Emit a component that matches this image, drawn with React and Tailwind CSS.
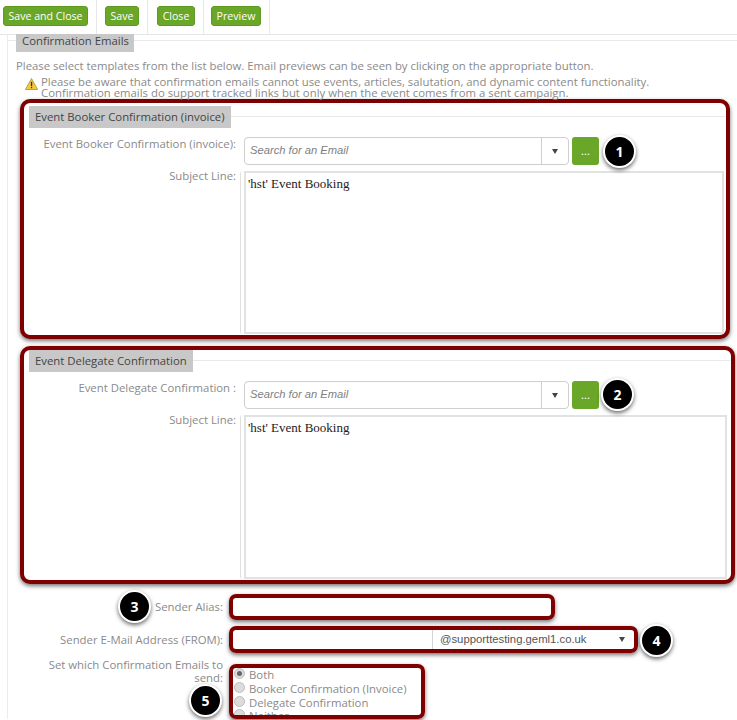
import React from 'react';

const labelFont = "font-['Open_Sans',sans-serif] text-[11.35px] text-[#8a8a8a]";
const redBox = 'border-[4px] border-[#7f0000] shadow-[0_2px_4px_rgba(0,0,0,0.55)]';

const Badge = ({ n, className }) => (
  <div className={`absolute w-[33px] h-[33px] rounded-full bg-black border-[2px] border-white shadow-[0_2px_4px_rgba(0,0,0,0.6)] flex items-center justify-center text-white text-[14px] font-bold font-['Open_Sans',sans-serif] ${className}`}>
    {n}
  </div>
);

const ToolButton = ({ children, className }) => (
  <button className={`block h-[20px] bg-[#6aa628] border border-[#5f9a22] rounded-[3px] text-white text-[10.6px] leading-none whitespace-nowrap font-['Open_Sans',sans-serif] ${className}`}>
    {children}
  </button>
);

const Legend = ({ children }) => (
  <div className="flex items-center">
    <div className="h-[22px] px-[6px] bg-[#c8c8c8] flex items-center text-[#444] font-['Open_Sans',sans-serif] text-[11.35px] whitespace-nowrap">
      {children}
    </div>
    <div className="flex-1 h-px bg-[#e8e8e8] -mt-[2px]" />
  </div>
);

const EmailSection = ({ title, label, textareaH, top, width, fieldW }) => (
  <section className={`${redBox} rounded-[10px] bg-white pl-[5px] pr-[1px] pb-[1px] ${width}`}>
    <div className={top}>
      <Legend>{title}</Legend>
    </div>
    <div className="flex mt-[9px]">
      <div className={`${labelFont} w-[207px] text-right -mt-[2px] whitespace-nowrap`}>{label}</div>
      <div className="ml-[8px] flex">
        <div className="w-[325px] h-[28px] bg-white border border-[#cfcfcf] rounded-[4px] flex">
          <div className="flex-1 pl-[5px] pb-[2px] flex items-center font-['Liberation_Sans',sans-serif] italic text-[11.2px] text-[#808080]">
            Search for an Email
          </div>
          <div className="w-[27px] border-l border-[#cfcfcf] flex items-center justify-center">
            <div className="w-0 h-0 border-l-[3.5px] border-r-[3.5px] border-t-[5px] border-l-transparent border-r-transparent border-t-[#444]" />
          </div>
        </div>
        <button className="ml-[3px] w-[27px] h-[28px] bg-[#6aa628] rounded-[3px] text-white text-[11px]">...</button>
      </div>
    </div>
    <div className="flex mt-[6px]">
      <div className={`${labelFont} w-[207px] text-right -mt-[4px] whitespace-nowrap`}>Subject Line:</div>
      <div className="ml-[4px] pl-[3px] border-l border-[#e0e0e0] rounded-l-[3px]">
        <div className={`${fieldW} ${textareaH} bg-white border-[2px] border-[#e2e2e2] pl-[2px] pt-[1px] font-['Liberation_Serif',serif] text-[13px] text-[#222]`}>
          'hst' Event Booking
        </div>
      </div>
    </div>
  </section>
);

const Radio = ({ label, checked }) => (
  <div className="flex items-center h-[13.7px]">
    <div className="w-[11px] h-[11px] rounded-full bg-[#dcdcdc] border border-[#bdbdbd] flex items-center justify-center -mt-[2px]">
      {checked && <div className="w-[5px] h-[5px] rounded-full bg-[#666]" />}
    </div>
    <span className="ml-[4px] font-['Open_Sans',sans-serif] text-[11.35px] text-[#8a8a8a] whitespace-nowrap">{label}</span>
  </div>
);

export default function App() {
  return (
    <div className="relative w-[737px] h-[720px] overflow-hidden bg-white">
      {/* Toolbar */}
      <div className="h-[35px] border-b border-[#e6e6e6] flex">
        <div className="pl-[3px] pr-[8px] pt-[6px] border-r border-[#e8e8e8]"><ToolButton className="w-[85px]">Save and Close</ToolButton></div>
        <div className="pl-[8px] pr-[8px] pt-[6px] border-r border-[#e8e8e8]"><ToolButton className="w-[34px]">Save</ToolButton></div>
        <div className="pl-[9px] pr-[8px] pt-[6px] border-r border-[#e8e8e8]"><ToolButton className="w-[38px]">Close</ToolButton></div>
        <div className="pl-[7px] pr-[8px] pt-[6px] border-r border-[#e8e8e8]"><ToolButton className="w-[50px]">Preview</ToolButton></div>
      </div>

      <div className="ml-[7px] border-l border-[#ececec] h-[685px]">
        <div className="relative">
          <div className="absolute left-0 right-0 top-[6px] h-px bg-[#e8e8e8]" />
          <div className="relative -mt-[1px] ml-[8px] w-[118px] h-[18px] bg-[#c8c8c8] px-[6px] leading-[14px] font-['Open_Sans',sans-serif] text-[11.35px] text-[#444] whitespace-nowrap">
            Confirmation Emails
          </div>
        </div>

        <p className={`${labelFont} ml-[8px] mt-[6px] leading-[15px] whitespace-nowrap`}>
          Please select templates from the list below. Email previews can be seen by clicking on the appropriate button.
        </p>
        <div className="flex ml-[17px] mt-[1px]">
          <svg width="13" height="12" viewBox="0 0 13 12" className="mt-[4px] shrink-0">
            <path d="M6.5 0.5 L12.6 11.5 L0.4 11.5 Z" fill="#f4c93a" stroke="#a8923c" strokeWidth="0.8" />
            <rect x="5.9" y="3.8" width="1.3" height="4.2" fill="#333" />
            <rect x="5.9" y="8.8" width="1.3" height="1.4" fill="#333" />
          </svg>
          <p className={`${labelFont} ml-[3px] leading-[11px] pt-[2px] whitespace-nowrap`}>
            Please be aware that confirmation emails cannot use events, articles, salutation, and dynamic content functionality.<br />
            Confirmation emails do support tracked links but only when the event comes from a sent campaign.
          </p>
        </div>

        <div className="ml-[12px] mt-[1px]">
          <EmailSection
            title="Event Booker Confirmation (invoice)"
            label="Event Booker Confirmation (invoice):"
            top="pt-[3px]"
            width="w-[710px]"
            fieldW="w-[480px]"
            textareaH="h-[163px]"
          />
          <div className="mt-[7px]">
            <EmailSection
              title="Event Delegate Confirmation"
              label="Event Delegate Confirmation :"
              top="pt-0"
              width="w-[715px]"
              fieldW="w-[483px]"
              textareaH="h-[164px]"
            />
          </div>
        </div>

        {/* Sender fields */}
        <div className="mt-[10px] flex items-center">
          <div className={`${labelFont} w-[215px] text-right`}>Sender Alias:</div>
          <div className={`ml-[6px] w-[326px] h-[26px] rounded-[7px] ${redBox}`} />
        </div>
        <div className="mt-[6px] flex items-center">
          <div className={`${labelFont} w-[215px] text-right whitespace-nowrap`}>Sender E-Mail Address (FROM):</div>
          <div className={`ml-[6px] w-[409px] h-[27px] rounded-[7px] flex ${redBox}`}>
            <div className="w-[200px] border-r border-[#d5d5d5]" />
            <div className="flex-1 pl-[7px] flex items-center justify-between pr-[9px] font-['Liberation_Sans',sans-serif] text-[11.3px] text-[#555]">
              @supporttesting.geml1.co.uk
              <div className="w-0 h-0 border-l-[3.5px] border-r-[3.5px] border-t-[5px] border-l-transparent border-r-transparent border-t-[#444]" />
            </div>
          </div>
        </div>
        <div className="mt-[11px] flex items-start">
          <div className={`${labelFont} w-[215px] pl-[35px] text-right leading-[13px] -mt-[6px]`}>
            Set which Confirmation Emails to send:
          </div>
          <div className={`ml-[6px] w-[196px] h-[55px] rounded-[7px] overflow-hidden pl-[1px] ${redBox}`}>
            <Radio label="Both" checked />
            <Radio label="Booker Confirmation (Invoice)" />
            <Radio label="Delegate Confirmation" />
            <Radio label="Neither" />
          </div>
        </div>
      </div>

      {/* Numbered callouts */}
      <Badge n="1" className="left-[603px] top-[135px]" />
      <Badge n="2" className="left-[601px] top-[378px]" />
      <Badge n="3" className="left-[118px] top-[590px]" />
      <Badge n="4" className="left-[640px] top-[624px]" />
      <Badge n="5" className="left-[189px] top-[684px]" />
    </div>
  );
}
